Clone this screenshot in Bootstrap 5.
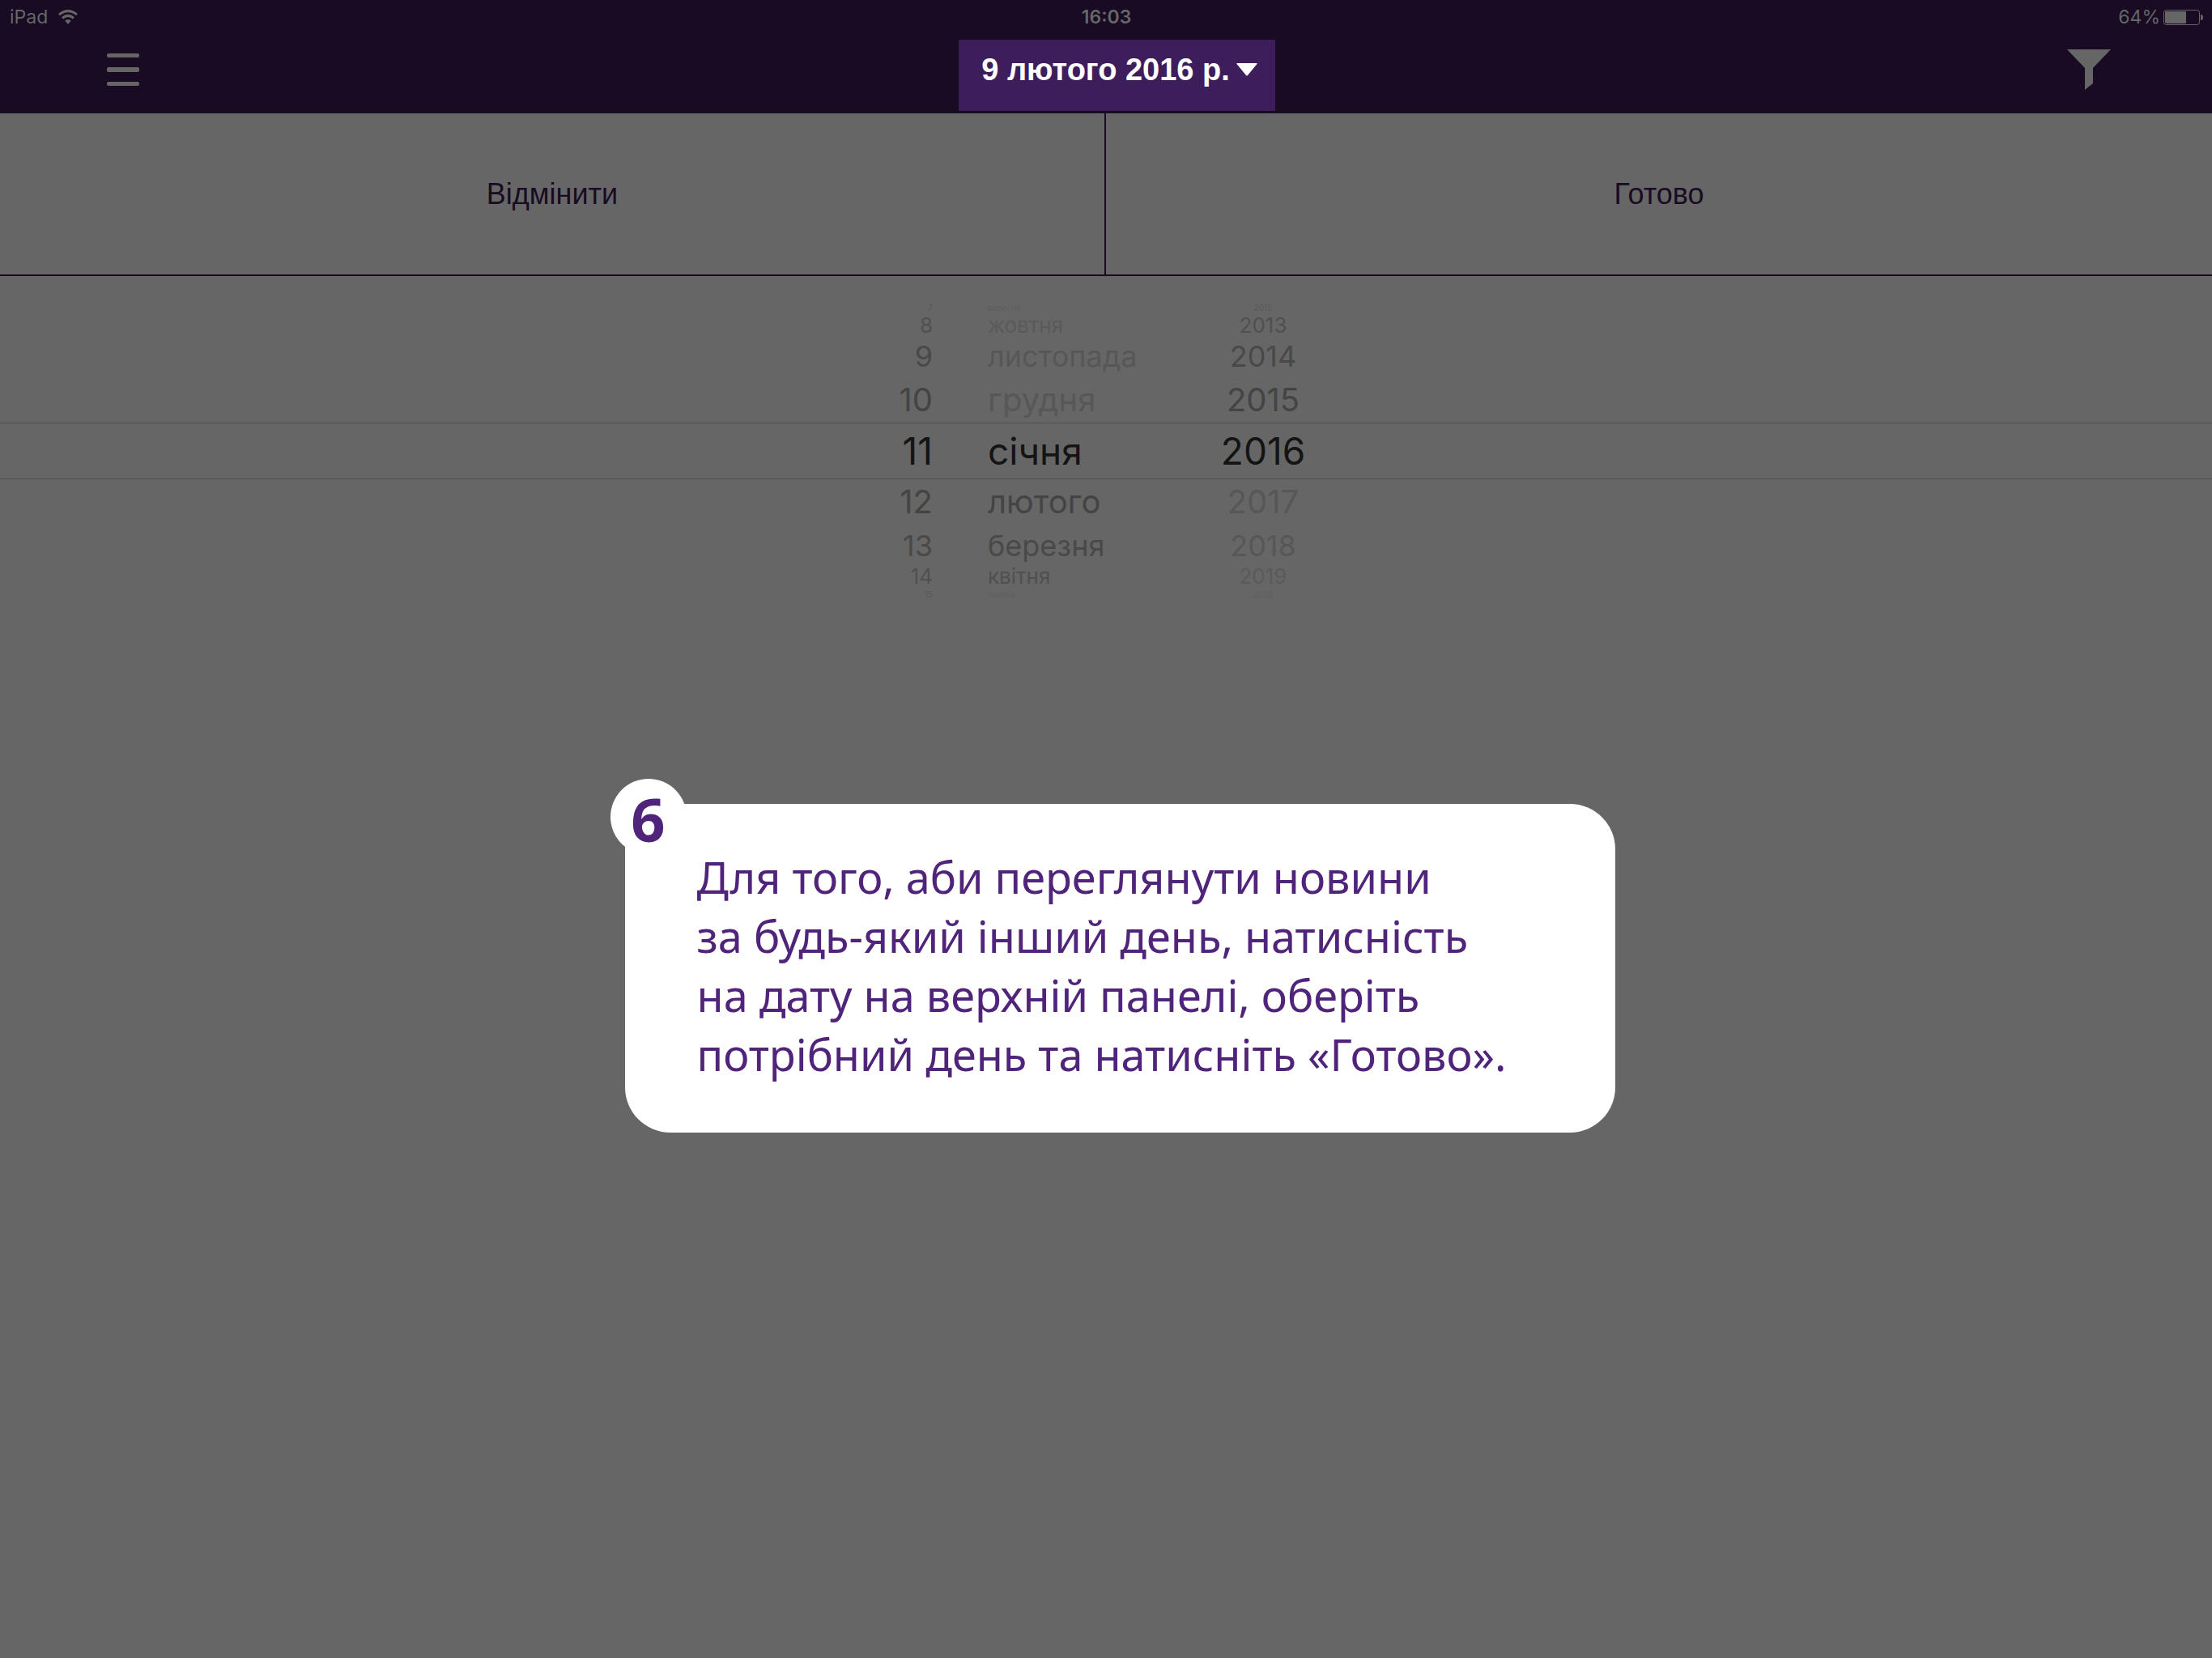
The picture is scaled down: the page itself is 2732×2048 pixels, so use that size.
<!DOCTYPE html>
<html lang="uk">
<head>
<meta charset="utf-8">
<meta name="viewport" content="width=device-width, initial-scale=1">
<title>Вибір дати</title>
<link rel="stylesheet" href="https://cdn.jsdelivr.net/npm/bootstrap@5.3.0/dist/css/bootstrap.min.css">
<style>
  body { background: #666; color: #190b23; font-family: "Liberation Sans", Arial, sans-serif; }
  .top-area { background: #190b23; color: #666; height: 140px; }
  .status-line { font: 400 23px/24px Inter, sans-serif; padding: 9px 11px 0 12px; }
  .wifi-group { gap: 13px; }
  .nav-line { padding-left: 27px; margin-top: 16px; }
  .menu-btn { margin-left: 105px; }
  .filter-btn { margin-right: 125px; }
  .date-btn { background: #3e1d5c; height: 88px; padding: 0 22px 14px 28px; gap: 8px; font-size: 38px; line-height: 44px; }
  .action-btn { height: 201px; padding-bottom: 6px; font-size: 36px; color: #190b23; border-bottom: 2px solid #190b23; }
  .action-btn + .action-btn { border-left: 2px solid #190b23; }
  .action-btn:first-child { flex: 0 1 calc(50% - 2px); }

  .wheel { padding-top: 29px; font-family: Inter, Roboto, sans-serif; }
  .wheel-row { color: #444; }
  .wheel-day { width: 60px; text-align: right; }
  .wheel-month { width: 260px; margin-left: 68px; }
  .wheel-year { width: 160px; text-align: center; }
  .faint { color: #575757; }
  .lv0 { height: 70px; font-size: 46px; line-height: 68px; color: #141414; border: solid #505050; border-width: 1px 0; }
  .lv1 { height: 56px; font-size: 40px; line-height: 56px; }
  .lv2 { height: 52px; font-size: 36px; line-height: 52px; color: #494949; }
  .lv3 { height: 24px; font-size: 26px; line-height: 24px; color: #505050; }
  .lv3 .faint { color: #5a5a5a; }
  .lv4 { height: 20px; font-size: 10px; line-height: 20px; color: #585858; }
  .lv4 .faint { color: #5e5e5e; }

  .tip-wrap { padding: 249px 0 80px 34px; }
  .tip-card { width: 1223px; max-width: 94%; min-height: 406px; background: #fff; border-radius: 56px; color: #50247a;
              font-family: "Noto Sans", "Open Sans", sans-serif; padding: 54px 48px 60px 89px; }
  .tip-text { font-size: 54px; line-height: 73px; }
  .tip-num { left: -18px; top: -31px; width: 94px; height: 94px; background: #fff; font-size: 74px; line-height: 94px; padding-top: 3px; }
</style>
</head>
<body>
<header class="top-area">
  <div class="status-line d-flex align-items-center">
    <div class="wifi-group col d-flex align-items-center">
      <span>iPad</span>
      <svg width="24" height="18" viewBox="0 0 24 18" fill="none" stroke="#666" stroke-width="3" aria-hidden="true">
        <path d="M1 6.200Q12-3 23 6.200"/><path d="M5 10.400Q12 4.400 19 10.400"/><path d="M8.200 13.600Q12 10.400 15.800 13.600L12 18z" fill="#666" stroke="none"/>
      </svg>
    </div>
    <div class="fw-semibold">16:03</div>
    <div class="col d-flex justify-content-end align-items-center">
      <span>64%</span>
      <svg class="ms-1" width="49" height="19" viewBox="0 0 49 19" aria-hidden="true">
        <rect x=".5" y=".5" width="44" height="18" rx="3" fill="none" stroke="#666"/><path d="M2 2h26v15H4q-2 0-2-2z" fill="#666"/><path d="M46 6q3 0 3 3.500t-3 3.500z" fill="#666"/>
      </svg>
    </div>
  </div>
  <nav class="nav-line d-flex align-items-center">
    <div class="col">
      <button type="button" class="menu-btn btn p-0 border-0 rounded-0 d-block" aria-label="Меню">
        <svg class="d-block" width="40" height="54" viewBox="0 0 40 54" fill="#666"><rect y="0" width="40" height="5" rx="2"/><rect y="17" width="40" height="6" rx="2"/><rect y="35" width="40" height="5" rx="2"/></svg>
      </button>
    </div>
    <button type="button" class="date-btn btn border-0 rounded-0 text-white fw-bold d-flex align-items-center">
      <span class="text-nowrap">9 лютого 2016 р.</span>
      <svg width="26" height="16" viewBox="0 0 26 16" fill="#fff" aria-hidden="true"><path d="M1 0h24q1 0 .500 1L14 15q-1 1.200-2 0L.5 1Q0 0 1 0z"/></svg>
    </button>
    <div class="col d-flex justify-content-end">
      <button type="button" class="filter-btn btn p-0 border-0 rounded-0" aria-label="Фільтр">
        <svg class="d-block" width="54" height="64" viewBox="0 0 54 64" fill="#666"><path d="M0 0h54L32 23v19l-10 8V23z"/></svg>
      </button>
    </div>
  </nav>
</header>

<main>
  <div class="d-flex">
    <button type="button" class="action-btn btn rounded-0 border-top-0 border-start-0 border-end-0">Відмінити</button>
    <button type="button" class="action-btn btn rounded-0 border-top-0 border-end-0 flex-fill">Готово</button>
  </div>

  <section class="wheel" aria-label="Дата">
    <div class="wheel-row lv4 d-flex justify-content-center"><span class="wheel-day">7</span><span class="wheel-month faint">вересня</span><span class="wheel-year">2012</span></div>
    <div class="wheel-row lv3 d-flex justify-content-center"><span class="wheel-day">8</span><span class="wheel-month faint">жовтня</span><span class="wheel-year">2013</span></div>
    <div class="wheel-row lv2 d-flex justify-content-center"><span class="wheel-day">9</span><span class="wheel-month faint">листопада</span><span class="wheel-year">2014</span></div>
    <div class="wheel-row lv1 d-flex justify-content-center"><span class="wheel-day">10</span><span class="wheel-month faint">грудня</span><span class="wheel-year">2015</span></div>
    <div class="wheel-row lv0 d-flex justify-content-center"><span class="wheel-day">11</span><span class="wheel-month">січня</span><span class="wheel-year">2016</span></div>
    <div class="wheel-row lv1 d-flex justify-content-center"><span class="wheel-day">12</span><span class="wheel-month">лютого</span><span class="wheel-year faint">2017</span></div>
    <div class="wheel-row lv2 d-flex justify-content-center"><span class="wheel-day">13</span><span class="wheel-month">березня</span><span class="wheel-year faint">2018</span></div>
    <div class="wheel-row lv3 d-flex justify-content-center"><span class="wheel-day">14</span><span class="wheel-month">квітня</span><span class="wheel-year faint">2019</span></div>
    <div class="wheel-row lv4 d-flex justify-content-center"><span class="wheel-day">15</span><span class="wheel-month faint">травня</span><span class="wheel-year faint">2020</span></div>
  </section>

  <div class="tip-wrap d-flex justify-content-center">
    <aside class="tip-card position-relative">
      <div class="tip-num position-absolute rounded-circle text-center fw-bold">6</div>
      <p class="tip-text mb-0">Для того, аби переглянути новини<br>за будь-який інший день, натисність<br>на дату на верхній панелі, оберіть<br>потрібний день та натисніть «Готово».</p>
    </aside>
  </div>
</main>
<script src="https://cdn.jsdelivr.net/npm/bootstrap@5.3.0/dist/js/bootstrap.bundle.min.js"></script>
</body>
</html>
